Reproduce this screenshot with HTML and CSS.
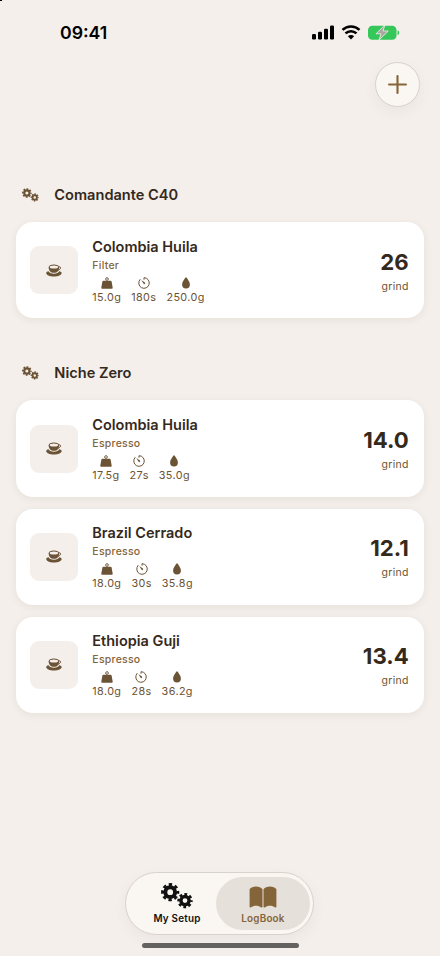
FILE: index.html
```html
<!DOCTYPE html>
<html lang="en">
<head>
<meta charset="utf-8">
<title>LogBook</title>
<link rel="stylesheet" href="styles.css">
</head>
<body>
<svg class="defs" aria-hidden="true">
  <symbol id="gears" viewBox="0 0 32 26">
    <g fill="none" stroke="currentColor">
      <circle cx="9.200" cy="9.200" r="4.900" stroke-width="4"/>
      <circle cx="9.200" cy="9.200" r="7.600" stroke-width="3" stroke-dasharray="3.300 2.669" stroke-dashoffset="1.650"/>
      <circle cx="24" cy="17.600" r="4.100" stroke-width="3.400"/>
      <circle cx="24" cy="17.600" r="6.300" stroke-width="2.800" stroke-dasharray="2.700 2.248" stroke-dashoffset="1.350"/>
    </g>
  </symbol>
  <symbol id="cup" viewBox="0 0 16 13">
    <path fill="currentColor" d="M2.700 3.200C2.700 1.500 4.800.5 7.900.5s5.200 1 5.200 2.700C13.100 6.300 11.400 8.800 7.900 8.800S2.700 6.300 2.700 3.200Z"/>
    <ellipse cx="7.900" cy="3" rx="4.200" ry="1.500" fill="#f4efeb"/>
    <path fill="none" stroke="currentColor" stroke-width="1" d="M12.800 2.800c2.300-.5 2.700 2.600-1 3.500"/>
    <path fill="currentColor" d="M2.500 7.200C1 7.500.2 8.100.2 9c0 1.900 3.300 3.500 7.700 3.500s7.800-1.600 7.800-3.500c0-.9-1-1.500-2.500-1.800-.7 1.500-2.500 2.500-5.300 2.500S3.300 8.700 2.500 7.200Z"/>
  </symbol>
  <symbol id="weight" viewBox="0 0 12 12">
    <circle cx="6" cy="2" r="1.350" fill="none" stroke="currentColor" stroke-width=".9"/>
    <path fill="currentColor" d="M2.500 3.700h7c.6 0 1 .3 1.100.9l1.100 6.200c.1.600-.2.900-.8.900H1.100c-.6 0-.9-.3-.8-.9l1.100-6.200c.1-.6.500-.9 1.100-.9Z"/>
  </symbol>
  <symbol id="timer" viewBox="0 0 12 12">
    <path fill="none" stroke="currentColor" stroke-width="1" stroke-linecap="round" d="M6 2.300V.7A5.300 5.300 0 1 1 2 2.500"/>
    <path fill="currentColor" d="M3.300 2.900 6.900 5.500a.9.900 0 0 1-1.300 1.300Z"/>
  </symbol>
  <symbol id="drop" viewBox="0 0 12 12">
    <path fill="currentColor" d="M6 .3c.3 0 .5.200.7.500 1.200 2 3.200 4.100 3.200 6.700A3.900 4.100 0 0 1 2.100 7.500C2.100 4.900 4.100 2.800 5.300.8 5.500.5 5.700.3 6 .3Z"/>
  </symbol>
</svg>

<header class="status">
  <span class="clock">09:41</span>
  <svg class="status-icons" viewBox="0 0 88 16">
    <rect x="0" y="10" width="4" height="5.500" rx="1.300"/>
    <rect x="6" y="7.800" width="4" height="7.700" rx="1.300"/>
    <rect x="12" y="4.700" width="4" height="10.800" rx="1.300"/>
    <rect x="18" y="1.500" width="4" height="14" rx="1.300"/>
    <g fill="none" stroke="#000" stroke-width="2.500">
      <path d="M30.500 5.900a12.200 12.200 0 0 1 17 0"/>
      <path d="M33.500 9.400a7.900 7.900 0 0 1 11 0"/>
    </g>
    <path d="M35.900 12.200a4.400 4.400 0 0 1 6.200 0L39 15.400Z"/>
    <rect x="56" y="1.800" width="28.500" height="14" rx="4.300" fill="#35c759"/>
    <path d="M85.500 6.500c2.200.5 2.200 4.100 0 4.600Z" fill="#35c759"/>
    <path d="M73 .8 64 9.800h5l-2 6.200 9.300-9H71Z" fill="#aaa6a2" stroke="#f4efeb" stroke-width=".8" stroke-linejoin="round"/>
  </svg>
</header>

<div class="toolbar">
  <button class="add" aria-label="Add"><svg viewBox="0 0 18 18"><path d="M9 1v16M1 9h16"/></svg></button>
</div>

<main>
  <section>
    <h2><svg class="gears"><use href="#gears"/></svg>Comandante C40</h2>
    <article class="card">
      <div class="thumb"><svg><use href="#cup"/></svg></div>
      <div class="info">
        <h3>Colombia Huila</h3>
        <p>Filter</p>
        <ul>
          <li><svg><use href="#weight"/></svg>15.0g</li>
          <li><svg><use href="#timer"/></svg>180s</li>
          <li><svg><use href="#drop"/></svg>250.0g</li>
        </ul>
      </div>
      <div class="grind"><b>26</b><span>grind</span></div>
    </article>
  </section>
  <section>
    <h2><svg class="gears"><use href="#gears"/></svg>Niche Zero</h2>
    <article class="card">
      <div class="thumb"><svg><use href="#cup"/></svg></div>
      <div class="info">
        <h3>Colombia Huila</h3>
        <p>Espresso</p>
        <ul>
          <li><svg><use href="#weight"/></svg>17.5g</li>
          <li><svg><use href="#timer"/></svg>27s</li>
          <li><svg><use href="#drop"/></svg>35.0g</li>
        </ul>
      </div>
      <div class="grind"><b>14.0</b><span>grind</span></div>
    </article>
    <article class="card">
      <div class="thumb"><svg><use href="#cup"/></svg></div>
      <div class="info">
        <h3>Brazil Cerrado</h3>
        <p>Espresso</p>
        <ul>
          <li><svg><use href="#weight"/></svg>18.0g</li>
          <li><svg><use href="#timer"/></svg>30s</li>
          <li><svg><use href="#drop"/></svg>35.8g</li>
        </ul>
      </div>
      <div class="grind"><b>12.1</b><span>grind</span></div>
    </article>
    <article class="card">
      <div class="thumb"><svg><use href="#cup"/></svg></div>
      <div class="info">
        <h3>Ethiopia Guji</h3>
        <p>Espresso</p>
        <ul>
          <li><svg><use href="#weight"/></svg>18.0g</li>
          <li><svg><use href="#timer"/></svg>28s</li>
          <li><svg><use href="#drop"/></svg>36.2g</li>
        </ul>
      </div>
      <div class="grind"><b>13.4</b><span>grind</span></div>
    </article>
  </section>
</main>

<footer>
  <nav>
    <a class="tab"><svg class="tab-gears"><use href="#gears"/></svg>My Setup</a>
    <a class="tab active"><svg class="book" viewBox="0 0 28 22"><path fill="currentColor" d="M13.500 3.200C12 1.200 9.800.4 7 .4S2 1.200.6 3.200v17.600c0 .7.600.9 1.200.6 3-2.200 7.500-2.200 10.500 0 .7.400 1.200.1 1.200-.6ZM14.500 3.200C16 1.200 18.200.4 21 .4s5 .8 6.400 2.800v17.600c0 .7-.6.900-1.200.6-3-2.200-7.500-2.200-10.500 0-.7.400-1.200.1-1.200-.6Z"/></svg>LogBook</a>
  </nav>
  <div class="home"></div>
</footer>
<div class="corner"></div>
</body>
</html>
```
FILE: styles.css
```css
* { box-sizing: border-box; margin: 0; padding: 0; }
body {
  width: 440px;
  height: 956px;
  overflow: hidden;
  display: flex;
  flex-direction: column;
  background: #f4efeb;
  color: #35291c;
  font-family: Inter, sans-serif;
}
svg { display: block; }
.defs { position: absolute; width: 0; height: 0; }
.corner { position: absolute; top: 0; left: 0; width: 2px; height: 1px; background: #000; }

.status {
  height: 62px;
  padding: 22px 40px 0 60px;
  display: flex;
  justify-content: space-between;
  align-items: flex-start;
}
.clock { font-size: 17.700px; line-height: 22px; font-weight: 600; color: #000; }
.status-icons { width: 88px; height: 16px; margin-top: 2px; }

.toolbar { height: 112.300px; padding-right: 20px; display: flex; justify-content: flex-end; }
.add {
  width: 45px;
  height: 45px;
  border: 1px solid #d8d2cc;
  border-radius: 50%;
  background: #faf6f2;
  box-shadow: 0 5px 14px rgba(70, 50, 30, .05);
  display: flex;
  align-items: center;
  justify-content: center;
}
.add svg { width: 19px; height: 19px; margin-top: -1px; fill: none; stroke: #84653a; stroke-width: 2; stroke-linecap: round; }

main { padding: 0 16.300px; flex: 1; }
section { margin-bottom: 34px; }
h2 {
  height: 48px;
  padding: 0 0 7px 6px;
  display: flex;
  align-items: center;
  gap: 15px;
  font-size: 14.600px;
  line-height: 20px;
  font-weight: 580;
}
.gears { width: 17px; height: 14px; color: #6b5336; }
.card {
  height: 96.200px;
  padding: 14px 15px 14px 14px;
  margin-bottom: 12px;
  border-radius: 17px;
  background: #fff;
  box-shadow: 0 2px 8px rgba(70, 45, 20, .07);
  display: flex;
  align-items: center;
}
.thumb {
  width: 48px;
  height: 48px;
  margin-right: 14px;
  border-radius: 9px;
  background: #f4efeb;
  display: flex;
  align-items: center;
  justify-content: center;
}
.thumb svg { width: 16px; height: 13px; color: #6b5336; }
.info { flex: 1; }
h3 { margin-top: .8px; font-size: 14.500px; line-height: 19px; font-weight: 580; }
.info p { font-size: 10.500px; line-height: 14px; margin-top: 3px; font-weight: 500; letter-spacing: .25px; color: #84653a; }
ul { display: flex; gap: 10px; margin-top: 4px; list-style: none; }
li {
  display: flex;
  flex-direction: column;
  align-items: center;
  gap: 2px;
  font-size: 10.800px;
  line-height: 14px;
  letter-spacing: .4px;
  color: #6b5336;
}
li svg { width: 12px; height: 12px; }
.grind { display: flex; flex-direction: column; align-items: flex-end; gap: 5px; }
.grind b { font-size: 22.200px; line-height: 27px; font-weight: 700; }
.grind span { font-size: 10.500px; line-height: 13px; letter-spacing: .3px; color: #6b5336; }

footer { height: 84px; display: flex; flex-direction: column; align-items: center; }
nav {
  width: 189px;
  height: 63px;
  padding: 4px;
  margin-right: 1px;
  border: 1px solid #d8d2cc;
  border-radius: 32px;
  background: #faf6f2;
  box-shadow: 0 5px 14px rgba(70, 50, 30, .05);
  display: flex;
}
.tab {
  width: 94px;
  flex: none;
  display: flex;
  flex-direction: column;
  align-items: center;
  padding-top: 6px;
  border-radius: 27px;
  font-size: 9.900px;
  line-height: 13px;
  font-weight: 600;
  letter-spacing: .2px;
  color: #111;
}
.tab.active { margin-left: -8px; background: #e6e0da; color: #84653a; }
.tab-gears { width: 32px; height: 26px; margin-bottom: 3px; }
.book { width: 28px; height: 22px; margin: 3px 0 4px; }
.home { width: 157px; height: 5px; margin-top: 7.500px; border-radius: 3px; background: #646261; }
```
